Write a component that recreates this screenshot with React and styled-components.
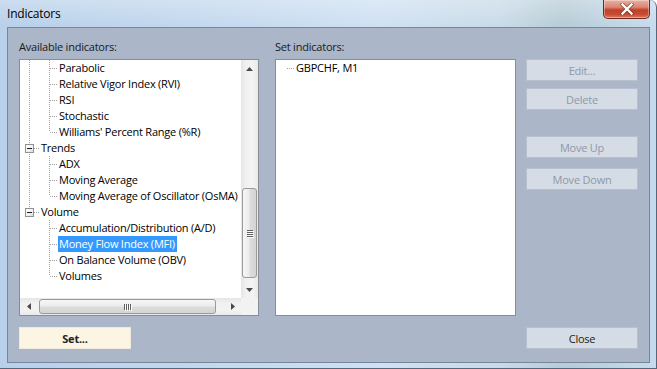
import React from 'react';
import styled, { createGlobalStyle, css } from 'styled-components';

const Global = createGlobalStyle`
  html, body { margin: 0; padding: 0; background: #ffffff; }
  body { font-family: "Open Sans", "Noto Sans", sans-serif; }
  * { box-sizing: border-box; }
`;

const UI_FONT = `"Open Sans", "Noto Sans", sans-serif`;
const DOT = '#a0a0a0';
const TIGHT = '-0.22px';

const Frame = styled.div`
  width: 657px;
  height: 369px;
  display: flex;
  flex-direction: column;
  background:
    linear-gradient(180deg, rgba(255,255,255,0.28) 0px, rgba(255,255,255,0) 26px),
    linear-gradient(90deg, #b8d0e9 0%, #c3d8ee 30%, #cfe1f3 58%, #c9dbe8 76%, #b7ccd6 86%, #c7dbee 100%);
  border-right: 1px solid #56677c;
  border-bottom: 1px solid #56677c;
  border-top-right-radius: 7px;
  overflow: hidden;
`;

const TitleBar = styled.div`
  height: 27px;
  flex: none;
  display: flex;
  align-items: flex-start;
  justify-content: space-between;
  padding-left: 7px;
`;

const Title = styled.span`
  font-family: ${UI_FONT};
  font-size: 12px;
  letter-spacing: ${TIGHT};
  line-height: 27px;
  color: #000;
`;

const CloseCaption = styled.div`
  width: 47px;
  height: 19px;
  margin-right: 6px;
  display: flex;
  align-items: center;
  justify-content: center;
  border: 1px solid #6e2a1f;
  border-top: none;
  border-radius: 0 0 5px 5px;
  background: linear-gradient(180deg, #eab1a2 0%, #d98672 40%, #c1412a 55%, #c84b33 80%, #dc7a60 100%);
  box-shadow: inset 0 0 0 1px rgba(255,255,255,0.35);
`;

const Client = styled.div`
  flex: 1;
  margin: 0 6px 5px 7px;
  border: 1px solid #76869b;
  background: #abb6c8;
  display: flex;
  flex-direction: column;
  padding: 11px 11px 13px 11px;
`;

const TopArea = styled.div`
  display: flex;
  align-items: flex-start;
`;

const Panel = styled.div`
  width: ${p => p.$w}px;
  margin-left: ${p => p.$ml || 0}px;
  display: flex;
  flex-direction: column;
`;

const Caption = styled.div`
  font-family: ${UI_FONT};
  font-size: 11px;
  letter-spacing: ${TIGHT};
  line-height: 16px;
  height: 16px;
  color: #1a1a1a;
  margin-bottom: 4px;
  white-space: nowrap;
`;

const ListFrame = styled.div`
  height: 257px;
  border: 1px solid #858d98;
  background: #ffffff;
  display: flex;
  flex-direction: column;
  overflow: hidden;
`;

const ListBody = styled.div`
  flex: 1;
  display: flex;
  min-height: 0;
`;

const TreeRows = styled.div`
  flex: 1;
  min-width: 0;
  padding-left: ${p => p.$pl || 0}px;
  display: flex;
  flex-direction: column;
  overflow: hidden;
`;

const Row = styled.div`
  height: 16px;
  flex: none;
  display: flex;
  align-items: stretch;
  font-family: ${UI_FONT};
  font-size: 11px;
  letter-spacing: ${TIGHT};
  color: #000;
`;

const vLine = css`
  content: '';
  position: absolute;
  left: ${p => p.$x}px;
  top: 0;
  width: 1px;
  background: repeating-linear-gradient(180deg, ${DOT} 0 1px, transparent 1px 2px);
`;

const Guide = styled.span`
  position: relative;
  width: 20px;
  flex: none;
  ${p => p.$line && css`
    &::before {
      ${vLine};
      height: 16px;
    }
  `}
`;

const NodeCell = styled.span`
  position: relative;
  width: ${p => p.$w}px;
  flex: none;
  ${p => p.$line !== 'none' && css`
    &::before {
      ${vLine};
      height: ${p.$line === 'half' ? 8 : 16}px;
    }
  `}
  &::after {
    content: '';
    position: absolute;
    left: ${p => p.$from}px;
    right: 0;
    top: 8px;
    height: 1px;
    background: repeating-linear-gradient(90deg, ${DOT} 0 1px, transparent 1px 2px);
  }
`;

const ExpandBox = styled.span`
  position: absolute;
  left: 5px;
  top: 4px;
  width: 9px;
  height: 9px;
  border: 1px solid #919191;
  background: linear-gradient(135deg, #ffffff 0%, #f0f0f0 60%, #dcdcdc 100%);
  z-index: 1;
  &::after {
    content: '';
    position: absolute;
    left: 1px;
    top: 3px;
    width: 5px;
    height: 1px;
    background: #1c1c1c;
  }
`;

const Label = styled.span`
  padding: 0 2px 0 1px;
  line-height: 16px;
  white-space: nowrap;
  ${p => p.$selected && css`
    background: #3399ff;
    color: #ffffff;
  `}
`;

const VScroll = styled.div`
  width: 17px;
  flex: none;
  display: flex;
  flex-direction: column;
  background: linear-gradient(90deg, #e6e6e6 0%, #f1f1f1 30%, #f3f3f3 70%, #e9e9e9 100%);
`;

const HScroll = styled.div`
  height: 17px;
  flex: 1;
  display: flex;
  background: linear-gradient(180deg, #e6e6e6 0%, #f1f1f1 30%, #f3f3f3 70%, #e9e9e9 100%);
`;

const HRow = styled.div`
  height: 17px;
  flex: none;
  display: flex;
`;

const Corner = styled.div`
  width: 17px;
  height: 17px;
  background: #f2f2f2;
`;

const ArrowBtn = styled.div`
  width: 17px;
  height: 17px;
  flex: none;
  display: flex;
  align-items: center;
  justify-content: center;
`;

const Track = styled.div`
  flex: 1;
  display: flex;
  flex-direction: ${p => (p.$vertical ? 'column' : 'row')};
  padding: ${p => (p.$vertical ? '0 0 0 1px' : '1px 0 0 0')};
`;

const Thumb = styled.div`
  flex: none;
  display: flex;
  align-items: center;
  justify-content: center;
  border: 1px solid #9a9a9a;
  border-radius: 3px;
  ${p => p.$vertical ? css`
    width: 15px;
    background: linear-gradient(90deg, #f6f6f6 0%, #ececec 45%, #dcdcdc 55%, #d4d4d4 100%);
  ` : css`
    height: 15px;
    background: linear-gradient(180deg, #f6f6f6 0%, #ececec 45%, #dcdcdc 55%, #d4d4d4 100%);
  `}
`;

const Grip = styled.div`
  display: flex;
  flex-direction: ${p => (p.$vertical ? 'column' : 'row')};
  gap: 1px;
  & > span {
    background: #5f5f5f;
    box-shadow: 1px 1px 0 #ffffff;
    ${p => p.$vertical ? css`width: 6px; height: 1px;` : css`width: 1px; height: 6px;`}
  }
`;

const ButtonColumn = styled.div`
  width: 112px;
  margin-left: 10px;
  padding-top: 20px;
  display: flex;
  flex-direction: column;
`;

const Button = styled.div`
  width: 112px;
  height: 22px;
  margin-top: ${p => p.$mt || 0}px;
  display: flex;
  align-items: center;
  justify-content: center;
  font-family: ${UI_FONT};
  font-size: 11px;
  letter-spacing: ${TIGHT};
  border: 1px solid #b7c0cc;
  background: #d5dce5;
  color: ${p => (p.$disabled ? '#8e99a8' : '#1c1c1c')};
  ${p => p.$accent && css`
    background: #fcf5e4;
    border-color: #f1eadb;
    font-weight: 700;
    color: #222222;
  `}
`;

const BottomRow = styled.div`
  margin-top: 11px;
  display: flex;
  justify-content: space-between;
`;

const ArrowIcon = ({ dir }) => {
  const pts = {
    up: '0,4 3.5,0 7,4',
    down: '0,0 7,0 3.5,4',
    left: '4,0 4,7 0,3.5',
    right: '0,0 4,3.5 0,7',
  }[dir];
  const vertical = dir === 'up' || dir === 'down';
  return (
    <svg width={vertical ? 7 : 4} height={vertical ? 4 : 7} viewBox={vertical ? '0 0 7 4' : '0 0 4 7'}>
      <polygon points={pts} fill="#4a4a4a" />
    </svg>
  );
};

const CloseGlyph = () => (
  <svg width="14" height="12" viewBox="0 0 14 12">
    <path d="M2.5 1.5 L11.5 10.5 M11.5 1.5 L2.5 10.5" stroke="#5a1d14" strokeWidth="4" strokeLinecap="square" opacity="0.55" />
    <path d="M2.5 1.5 L11.5 10.5 M11.5 1.5 L2.5 10.5" stroke="#ffffff" strokeWidth="2.4" strokeLinecap="square" />
  </svg>
);

const treeRows = [
  { label: 'Parabolic', guides: [true], line: 'full' },
  { label: 'Relative Vigor Index (RVI)', guides: [true], line: 'full' },
  { label: 'RSI', guides: [true], line: 'full' },
  { label: 'Stochastic', guides: [true], line: 'full' },
  { label: "Williams' Percent Range (%R)", guides: [true], line: 'half' },
  { label: 'Trends', guides: [], line: 'full', box: true },
  { label: 'ADX', guides: [true], line: 'full' },
  { label: 'Moving Average', guides: [true], line: 'full' },
  { label: 'Moving Average of Oscillator (OsMA)', guides: [true], line: 'half' },
  { label: 'Volume', guides: [], line: 'half', box: true },
  { label: 'Accumulation/Distribution (A/D)', guides: [false], line: 'full' },
  { label: 'Money Flow Index (MFI)', guides: [false], line: 'full', selected: true },
  { label: 'On Balance Volume (OBV)', guides: [false], line: 'full' },
  { label: 'Volumes', guides: [false], line: 'half' },
];

const TreeRow = ({ row }) => (
  <Row>
    {row.guides.map((g, i) => (
      <Guide key={i} $line={g} $x={9} />
    ))}
    <NodeCell $w={row.box ? 20 : 18} $x={9} $from={row.box ? 14 : 10} $line={row.line}>
      {row.box && <ExpandBox />}
    </NodeCell>
    <Label $selected={row.selected}>{row.label}</Label>
  </Row>
);

const VerticalScrollbar = ({ offset, size }) => (
  <VScroll>
    <ArrowBtn><ArrowIcon dir="up" /></ArrowBtn>
    <Track $vertical>
      <Thumb $vertical style={{ marginTop: offset, height: size }}>
        <Grip $vertical><span /><span /><span /><span /></Grip>
      </Thumb>
    </Track>
    <ArrowBtn><ArrowIcon dir="down" /></ArrowBtn>
  </VScroll>
);

const HorizontalScrollbar = ({ offset, size }) => (
  <HScroll>
    <ArrowBtn><ArrowIcon dir="left" /></ArrowBtn>
    <Track>
      <Thumb style={{ marginLeft: offset, width: size }}>
        <Grip><span /><span /><span /><span /></Grip>
      </Thumb>
    </Track>
    <ArrowBtn><ArrowIcon dir="right" /></ArrowBtn>
  </HScroll>
);

export default function App() {
  return (
    <>
      <Global />
      <Frame>
        <TitleBar>
          <Title>Indicators</Title>
          <CloseCaption><CloseGlyph /></CloseCaption>
        </TitleBar>
        <Client>
          <TopArea>
            <Panel $w={240}>
              <Caption>Available indicators:</Caption>
              <ListFrame>
                <ListBody>
                  <TreeRows>
                    {treeRows.map((r) => (
                      <TreeRow key={r.label} row={r} />
                    ))}
                  </TreeRows>
                  <VerticalScrollbar offset={111} size={90} />
                </ListBody>
                <HRow>
                  <HorizontalScrollbar offset={2} size={177} />
                  <Corner />
                </HRow>
              </ListFrame>
            </Panel>
            <Panel $w={241} $ml={16}>
              <Caption>Set indicators:</Caption>
              <ListFrame>
                <TreeRows $pl={1}>
                  <Row>
                    <NodeCell $w={18} $x={9} $from={10} $line="none" />
                    <Label>GBPCHF, M1</Label>
                  </Row>
                </TreeRows>
              </ListFrame>
            </Panel>
            <ButtonColumn>
              <Button $disabled>Edit...</Button>
              <Button $disabled $mt={7}>Delete</Button>
              <Button $disabled $mt={26}>Move Up</Button>
              <Button $disabled $mt={10}>Move Down</Button>
            </ButtonColumn>
          </TopArea>
          <BottomRow>
            <Button $accent>Set...</Button>
            <Button>Close</Button>
          </BottomRow>
        </Client>
      </Frame>
    </>
  );
}
